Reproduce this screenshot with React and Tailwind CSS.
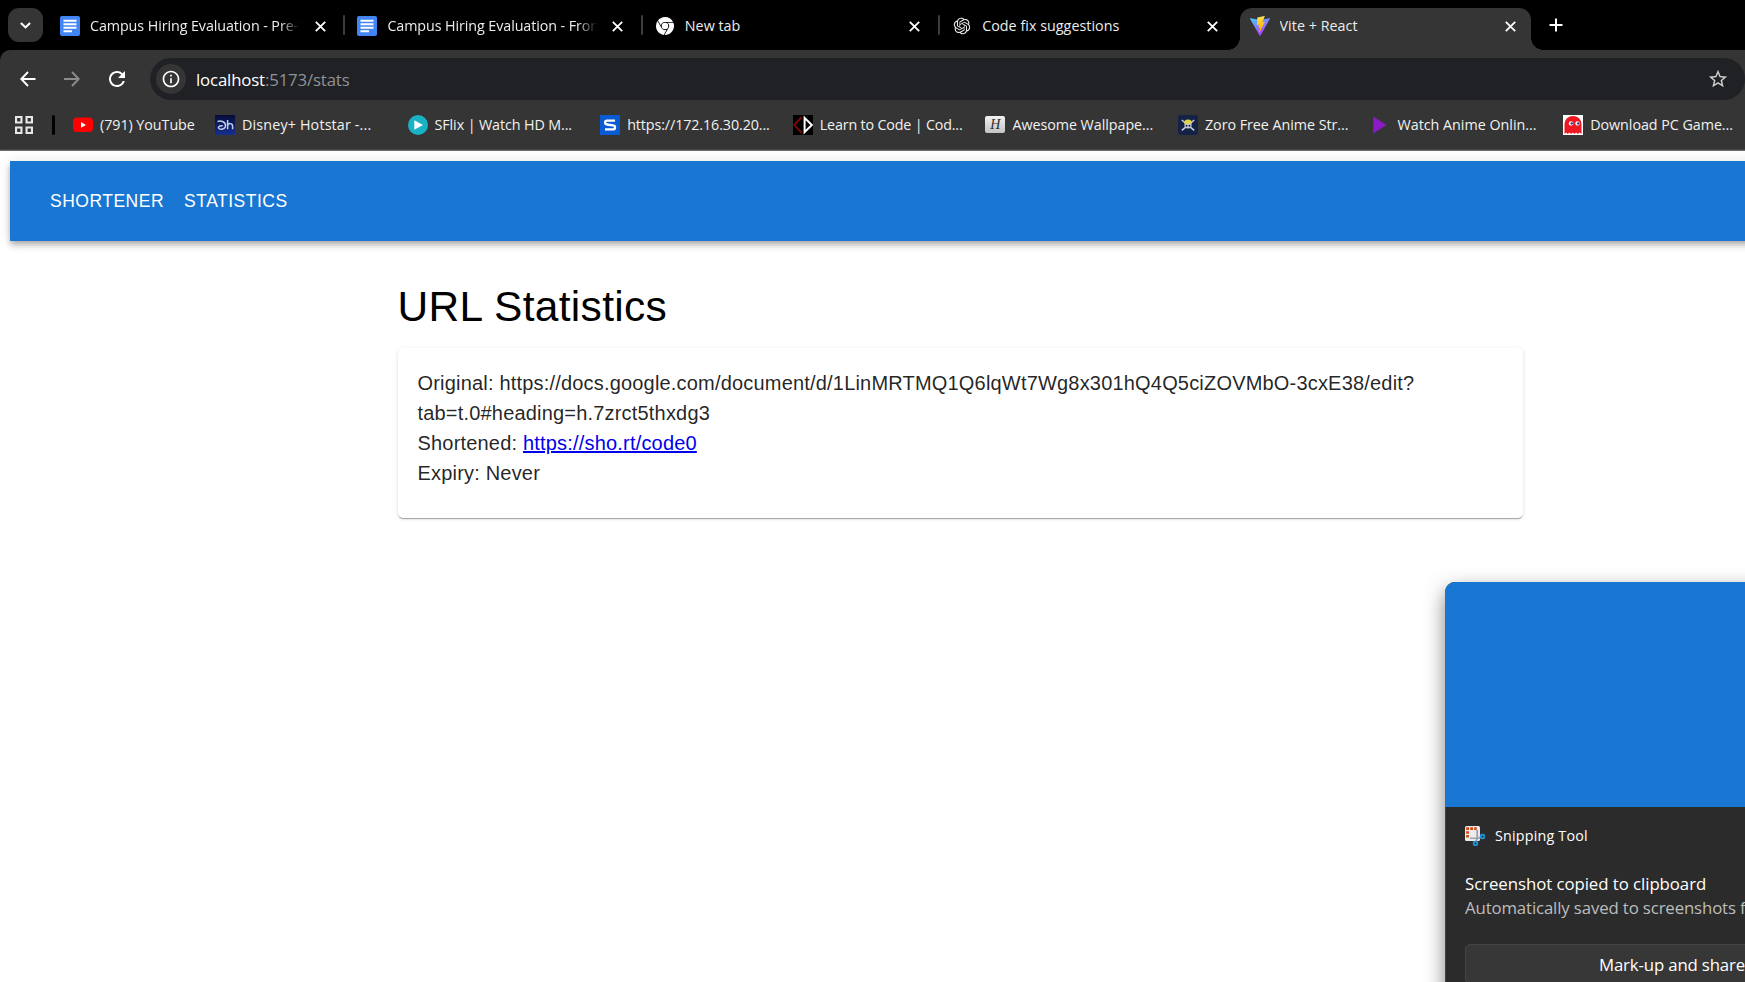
import React from "react";
import { MdStarBorder, MdRefresh, MdInfoOutline } from "react-icons/md";
import { RiOpenaiFill } from "react-icons/ri";
import { SiGooglechrome } from "react-icons/si";

function CloseIcon() {
  return (
    <svg className="h-[11px] w-[11px] shrink-0" viewBox="0 0 11 11" fill="none" stroke="#fff" strokeWidth="1.8">
      <path d="M0.8 0.8 10.2 10.2M10.2 0.8 0.8 10.2" />
    </svg>
  );
}

function DocsIcon() {
  return (
    <svg className="h-5 w-5" viewBox="0 0 20 20">
      <rect width="20" height="20" rx="2" fill="#4285f4" />
      <path d="M3.5 4.8h13M3.5 8.3h13M3.5 11.8h13M3.5 15.3h8.5" stroke="#fff" strokeWidth="1.9" />
    </svg>
  );
}

function ViteIcon() {
  return (
    <svg className="h-5 w-5" viewBox="0 0 20 20">
      <defs>
        <linearGradient id="vite-body" x1="0" y1="0" x2="0.6" y2="1">
          <stop offset="0" stopColor="#41d1ff" />
          <stop offset="1" stopColor="#bd34fe" />
        </linearGradient>
        <linearGradient id="vite-bolt" x1="0.4" y1="0" x2="0.6" y2="1">
          <stop offset="0" stopColor="#ffea83" />
          <stop offset="0.3" stopColor="#ffcf20" />
          <stop offset="1" stopColor="#ffa800" />
        </linearGradient>
      </defs>
      <path d="M19.8 3 10.5 19.6a.5.5 0 0 1-.9 0L.1 3a.5.5 0 0 1 .5-.8l9.4 1.7 9.2-1.7a.5.5 0 0 1 .6.8Z" fill="url(#vite-body)" />
      <path d="M14.4.1 7.6 1.4a.3.3 0 0 0-.2.3l-.5 7.2c0 .2.2.3.3.3l2-.4-.6 2.8c0 .2.2.4.4.3l1.1-.4-.9 4.4c0 .3.3.4.5.2l5-9.8c.1-.2-.1-.4-.3-.4l-2 .4L14.7.4c0-.2-.1-.3-.3-.3Z" fill="url(#vite-bolt)" />
    </svg>
  );
}

function Tab({ icon, title, active, fade, last }) {
  return (
    <div className={active ? "relative flex h-[42px] w-[291px] shrink-0 items-center rounded-t-[12px] bg-[#353535] pl-2.5" : "relative flex h-[42px] w-[297.4px] shrink-0 items-center pl-[14px]"}>
      {active && (
        <>
          <span className="absolute bottom-0 -left-3 h-3 w-3 bg-[radial-gradient(circle_at_0_0,transparent_11.5px,#353535_12px)]" />
          <span className="absolute -right-3 bottom-0 h-3 w-3 bg-[radial-gradient(circle_at_100%_0,transparent_11.5px,#353535_12px)]" />
        </>
      )}
      <span className="-mt-1.5 flex h-5 w-5 shrink-0 items-center justify-center">{icon}</span>
      <span
        className={
          "-mt-1.5 ml-[10px] w-[210px] shrink-0 overflow-hidden text-[14.3px] whitespace-nowrap text-[#ececec] " +
          (fade ? "tracking-[-0.08px] [mask-image:linear-gradient(to_right,#000_190px,transparent_210px)]" : "tracking-[0.03px]")
        }
      >
        {title}
      </span>
      <span className={active ? "-mt-1.5 ml-[15px]" : "-mt-1.5 ml-[14.5px]"}>
        <CloseIcon />
      </span>
      {!active && !last && <span className="absolute -right-[2px] bottom-[15px] h-5 w-[2px] rounded bg-[#3c3c3c]" />}
    </div>
  );
}

function Bookmark({ icon, title, spacing }) {
  return (
    <div className="flex w-[192.6px] shrink-0 items-center">
      <span className="flex h-5 w-5 shrink-0">{icon}</span>
      <span className={"ml-[7px] text-[14.3px] whitespace-nowrap text-[#f1f1f1] " + (spacing || "tracking-[-0.1px]")}>{title}</span>
    </div>
  );
}

const icon20 = "h-5 w-5";

const HotstarIcon = () => (
  <svg className={icon20} viewBox="0 0 20 20" fill="none" stroke="#c3cce8" strokeWidth="1.5">
    <defs>
      <linearGradient id="hotstar-bg" x1="0" y1="0" x2="0" y2="1">
        <stop offset="0" stopColor="#050d38" />
        <stop offset="1" stopColor="#15308f" />
      </linearGradient>
    </defs>
    <rect width="20" height="20" fill="url(#hotstar-bg)" stroke="none" />
    <path d="M2.5 6.5c4-1.2 8 .4 8 4 0 2.600-2.300 4-4.700 3.800-2-.2-2.900-1.500-2-2.600.9-1 2.500-1 4-.9" />
    <path d="M12.600 5v9.300M12.600 11c.3-3.200 5-3.200 5 .2v3.100" />
  </svg>
);

const SflixIcon = () => (
  <svg className={icon20} viewBox="0 0 20 20">
    <circle cx="10" cy="10" r="10" fill="#19b1c4" />
    <path d="M6.3 5.2v9.6L15 10Z" fill="#fff" />
  </svg>
);

const SophosIcon = () => (
  <svg className={icon20} viewBox="0 0 20 20">
    <rect width="20" height="20" fill="#0a5bd3" />
    <path d="M15 5.7H7a1.9 1.9 0 0 0 0 3.8l6 .9a2 2 0 0 1 0 4H5" fill="none" stroke="#fff" strokeWidth="2.3" />
  </svg>
);

const CodechefIcon = () => (
  <svg className={icon20} viewBox="0 0 20 20" fill="none" strokeWidth="2">
    <rect width="20" height="20" fill="#000" />
    <path d="M8.5 2.3 1.3 9.8l7.2 8" stroke="#7c0808" />
    <path d="M11.6 2.8v14.4L18.8 10Z" stroke="#fff" />
  </svg>
);

const WallpaperIcon = () => (
  <span className="mt-px flex h-[17px] w-5 items-center justify-center rounded-[2px] bg-linear-to-b from-[#f2f2f2] to-[#c4c4c4] font-['Liberation_Serif',serif] text-[14px] leading-none text-[#2b2b2b] italic">
    H
  </span>
);

const ZoroIcon = () => (
  <svg className={icon20} viewBox="0 0 20 20">
    <rect width="20" height="20" rx="3" fill="#152248" />
    <path d="M3.8 5 16.2 15.4M16.2 5 3.8 15.4" stroke="#c8cbd2" strokeWidth="1.6" />
    <ellipse cx="10" cy="10.3" rx="3.6" ry="3.3" fill="#c8cbd2" />
    <path d="M6 8.6a4 4 0 0 1 8 0Z" fill="#e3d33c" />
    <circle cx="8.5" cy="10.8" r="1" fill="#152248" />
    <circle cx="11.5" cy="10.8" r="1" fill="#152248" />
  </svg>
);

const AnimeIcon = () => (
  <svg className={icon20} viewBox="0 0 20 20">
    <path d="M2.3 1.5 15.5 10 2.3 18.5Z" fill="#8a1bc7" />
  </svg>
);

const GhostIcon = () => (
  <svg className={icon20} viewBox="0 0 20 20">
    <rect width="20" height="20" fill="#fff" />
    <path d="M1.5 19V9.2a8.5 8.3 0 0 1 17 0V19l-1.9-1.6L14.8 19l-1.7-1.6L11.3 19l-1.5-1.6L8.1 19l-1.7-1.6L4.7 19l-1.5-1.6Z" fill="#ee1620" />
    <circle cx="8" cy="8.4" r="2.2" fill="#fff" />
    <circle cx="14.5" cy="8.4" r="2.2" fill="#fff" />
    <circle cx="8.7" cy="8.4" r="1.2" fill="#26348c" />
    <circle cx="15.2" cy="8.4" r="1.2" fill="#26348c" />
  </svg>
);

const bookmarks = [
  { title: "Disney+ Hotstar -...", Icon: HotstarIcon, spacing: "tracking-[0.16px]" },
  { title: "SFlix | Watch HD M...", Icon: SflixIcon },
  { title: "https://172.16.30.20...", Icon: SophosIcon },
  { title: "Learn to Code | Cod...", Icon: CodechefIcon, spacing: "tracking-[-0.17px]" },
  { title: "Awesome Wallpape...", Icon: WallpaperIcon, spacing: "tracking-[-0.04px]" },
  { title: "Zoro Free Anime Str...", Icon: ZoroIcon, spacing: "tracking-[-0.04px]" },
  { title: "Watch Anime Onlin...", Icon: AnimeIcon, spacing: "tracking-[-0.01px]" },
  { title: "Download PC Game...", Icon: GhostIcon, spacing: "tracking-[-0.04px]" },
];

function BrowserChrome() {
  return (
    <header className="flex h-[151px] shrink-0 flex-col bg-black font-['Open_Sans','Noto_Sans',sans-serif]">
      <div className="flex h-[50px] items-end">
        <button className="mb-2 ml-2 flex h-[34px] w-[35px] shrink-0 items-center justify-center rounded-[11px] bg-[#353535]">
          <svg className="h-[7px] w-[11px]" viewBox="0 0 11 7" fill="none" stroke="#fff" strokeWidth="2.1">
            <path d="M0.9 0.9 5.5 5.4 10.1 0.9" />
          </svg>
        </button>
        <div className="ml-[3px] flex items-end">
          <Tab icon={<DocsIcon />} title="Campus Hiring Evaluation - Pre-test" fade />
          <Tab icon={<DocsIcon />} title="Campus Hiring Evaluation - Frontend" fade />
          <Tab icon={<SiGooglechrome className="h-[18px] w-[18px] text-white" />} title="New tab" />
          <Tab icon={<RiOpenaiFill className="h-5 w-5 text-[#e8e8e8]" />} title="Code fix suggestions" last />
          <div className="ml-1 flex shrink-0">
            <Tab icon={<ViteIcon />} title="Vite + React" active />
          </div>
        </div>
        <svg className="mb-[18px] ml-[18px] h-[14px] w-[14px]" viewBox="0 0 14 14" stroke="#fff" strokeWidth="2">
          <path d="M7 0.5v13M0.5 7h13" />
        </svg>
      </div>
      <div className="flex h-[100px] flex-col rounded-tl-[10px] border-b border-[#454545] bg-[#353535] pt-2">
        <div className="flex h-[42px] items-center">
          <svg className="ml-5 h-4 w-4" viewBox="0 0 16 16" fill="none" stroke="#fff" strokeWidth="1.9">
            <path d="M15.5 8H1.5M8 1 1.3 8 8 15" />
          </svg>
          <svg className="ml-[28px] h-4 w-4" viewBox="0 0 16 16" fill="none" stroke="#8c8c8c" strokeWidth="1.9">
            <path d="M0 8h14M8 1l6.700 7L8 15" />
          </svg>
          <MdRefresh className="ml-[25px] h-6 w-6 text-white" />
          <div className="ml-[21px] flex h-[42px] w-[1595px] shrink-0 items-center rounded-full bg-[#202124]">
            <span className="ml-1.5 flex h-[30px] w-[30px] items-center justify-center rounded-full bg-[#353535]">
              <MdInfoOutline className="h-5 w-5 text-white" />
            </span>
            <span className="mt-px ml-[10px] text-[16.8px] leading-[24px] tracking-[-0.15px] text-white">
              localhost<span className="text-[#8f9397]">:5173/stats</span>
            </span>
            <MdStarBorder className="mr-[16px] ml-auto h-[22px] w-[22px] text-[#cfcfcf]" />
          </div>
        </div>
        <div className="mt-[15px] flex h-5 items-center">
          <svg className="ml-[15px] h-[18px] w-[18px] shrink-0" viewBox="0 0 18 18" fill="none" stroke="#e8e8e8" strokeWidth="2.1">
            <path d="M1.05 1.05h5.4v5.4h-5.4ZM11.55 1.05h5.4v5.4h-5.4ZM1.05 11.55h5.4v5.4h-5.4ZM11.55 11.55h5.4v5.4h-5.4Z" />
          </svg>
          <span className="ml-[19px] h-5 w-[3px] shrink-0 rounded bg-black" />
          <div className="ml-[18px] flex w-[142px] shrink-0 items-center">
            <svg className={icon20} viewBox="0 0 20 20">
              <rect y="2.5" width="20" height="14.5" rx="4" fill="#f00" />
              <path d="M8 7v5.8l4.9-2.9Z" fill="#fff" />
            </svg>
            <span className="ml-[7px] text-[14.3px] tracking-[-0.05px] whitespace-nowrap text-[#f1f1f1]">(791) YouTube</span>
          </div>
          {bookmarks.map(({ title, Icon, spacing }) => (
            <Bookmark key={title} icon={<Icon />} title={title} spacing={spacing} />
          ))}
        </div>
      </div>
      <div className="h-px bg-[#6a6a6a]" />
    </header>
  );
}

function SnippingIcon() {
  return (
    <svg className={icon20} viewBox="0 0 20 20" fill="none">
      <rect width="15" height="15" rx="1.5" fill="#ececec" />
      <path d="M1.2 2.6h10.5" stroke="#d8430f" strokeWidth="2.8" strokeDasharray="2.8 1.2" />
      <path d="M2.5 5.2v6.8" stroke="#d8430f" strokeWidth="2.8" strokeDasharray="2.6 1.2" />
      <path d="M12.2 4v8.500l-1.500 3" stroke="#9aa2a8" strokeWidth="1.8" />
      <path d="M5 12.200h9l2-1.200" stroke="#9aa2a8" strokeWidth="1.6" />
      <circle cx="17.500" cy="10.600" r="1.900" stroke="#1d9be0" strokeWidth="1.700" />
      <circle cx="10.500" cy="17.500" r="1.900" stroke="#1d9be0" strokeWidth="1.700" />
    </svg>
  );
}

function Toast() {
  return (
    <aside className="absolute top-[582px] left-[1445px] flex h-[420px] w-[456px] flex-col overflow-hidden rounded-tl-[10px] bg-[#2b2b2b] font-['Open_Sans','Noto_Sans',sans-serif] shadow-[0_8px_20px_rgba(0,0,0,0.5)]">
      <div className="h-[225px] shrink-0 bg-[#1976d2]" />
      <div className="flex flex-1 flex-col border-l border-[#444] pl-[19px]">
        <div className="mt-[19px] flex h-5 items-center">
          <SnippingIcon />
          <span className="ml-[10px] text-[14.3px] tracking-[0.2px] text-white">Snipping Tool</span>
        </div>
        <p className="mt-[26px] text-[16.8px] leading-6 tracking-[-0.05px] whitespace-nowrap text-white">Screenshot copied to clipboard</p>
        <p className="text-[16.8px] leading-6 tracking-[-0.13px] whitespace-nowrap text-[#bdbdbd]">Automatically saved to screenshots folder.</p>
        <div className="mt-[24px] flex h-10 w-[416px] items-center rounded-[5px] border border-[#454545] bg-[#373737] pt-0.5 pl-[133px]">
          <span className="text-[16.8px] tracking-[-0.15px] whitespace-nowrap text-white">Mark-up and share</span>
        </div>
      </div>
    </aside>
  );
}

export default function App() {
  return (
    <div className="relative flex h-[982px] w-[1745px] flex-col overflow-hidden bg-white">
      <BrowserChrome />
      <div className="flex flex-1 flex-col overflow-hidden bg-white pt-[10px] pl-[10px] font-['Liberation_Sans',Arial,sans-serif]">
        <nav className="flex h-20 w-[1901px] shrink-0 items-center gap-5 bg-[#1976d2] pl-10 text-[17.5px] leading-[30px] tracking-[0.5px] text-white shadow-[0_2.5px_5px_-1px_rgba(0,0,0,0.2),0_5px_6px_rgba(0,0,0,0.14),0_1px_12px_rgba(0,0,0,0.12)]">
          <a>SHORTENER</a>
          <a>STATISTICS</a>
        </nav>
        <main className="ml-[387.5px] flex w-[1125px] flex-col pt-[40px]">
          <h1 className="text-[42.5px] leading-[52px] tracking-[0.31px] text-black">URL Statistics</h1>
          <section className="mt-[15px] flex h-[170px] flex-col rounded-[5px] bg-white p-5 text-[20px] leading-[30px] tracking-[0.188px] text-black/87 shadow-[0_2px_1px_-1px_rgba(0,0,0,0.2),0_1px_1px_rgba(0,0,0,0.14),0_1px_4px_rgba(0,0,0,0.12)]">
            <p>Original: https://docs.google.com/document/d/1LinMRTMQ1Q6lqWt7Wg8x301hQ4Q5ciZOVMbO-3cxE38/edit?<wbr />tab=t.0#heading=h.7zrct5thxdg3</p>
            <p>
              Shortened: <a className="text-[#0000ee] underline">https://sho.rt/code0</a>
            </p>
            <p>Expiry: Never</p>
          </section>
        </main>
      </div>
      <Toast />
    </div>
  );
}
